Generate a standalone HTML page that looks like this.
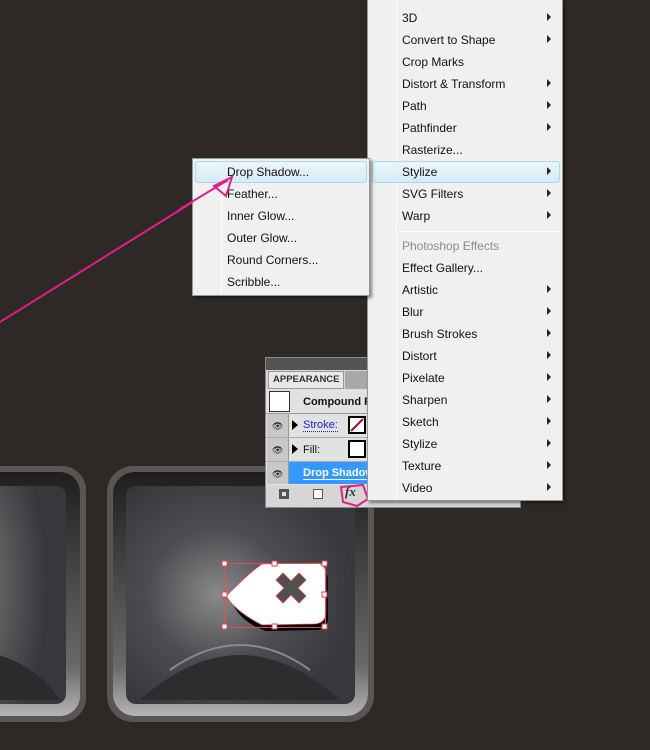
<!DOCTYPE html>
<html><head><meta charset="utf-8"><style>
*{margin:0;padding:0;box-sizing:border-box}
body{width:650px;height:750px;background:#2e2926;position:relative;overflow:hidden;font-family:"Liberation Sans","DejaVu Sans",sans-serif;font-size:12px;color:#111}
.menu{position:absolute;background:#f0f0f0;border:1px solid #979797;box-shadow:2px 2px 3px rgba(0,0,0,.45)}
.it{position:absolute;height:22px;line-height:24px;white-space:nowrap}
.ar{position:absolute;width:0;height:0;border-left:4px solid #222;border-top:4px solid transparent;border-bottom:4px solid transparent}
.hl{position:absolute;height:22px;border:1px solid #a8d8eb;border-radius:3px;background:linear-gradient(#eaf5fa,#d6ebf5)}
.sep{position:absolute;width:1px;background:#e2e2e2;border-right:1px solid #fff}
</style></head><body>

<svg style="position:absolute;left:0;top:0" width="650" height="750">
<defs>
<radialGradient id="g1" cx="0.4" cy="0.5" r="0.6"><stop offset="0" stop-color="#8a8a8c"/><stop offset="0.5" stop-color="#4e4e52"/><stop offset="1" stop-color="#38383c"/></radialGradient>
<radialGradient id="g0" cx="0" cy="0.45" r="0.8"><stop offset="0" stop-color="#7a7a7c"/><stop offset="1" stop-color="#38383c"/></radialGradient>
<linearGradient id="rim" x1="0" y1="0" x2="0" y2="1"><stop offset="0" stop-color="#1f1e1f"/><stop offset="0.8" stop-color="#6a6a6c"/><stop offset="1" stop-color="#b5b5b7"/></linearGradient>
</defs>
<rect x="-40" y="466" width="126" height="256" rx="24" fill="#5a5452"/>
<rect x="-34" y="472" width="114" height="244" rx="20" fill="url(#rim)"/>
<rect x="-30" y="486" width="96" height="218" rx="10" fill="url(#g0)"/>
<path d="M-30 650 Q30 655 60 700 L-30 700Z" fill="#2b2b2e"/>
<rect x="107" y="466" width="267" height="256" rx="26" fill="#5a5452"/>
<rect x="113" y="472" width="255" height="244" rx="22" fill="url(#rim)"/>
<rect x="126" y="486" width="229" height="218" rx="10" fill="url(#g1)"/>
<path d="M140 700 Q240 610 340 700Z" fill="#2d2d30"/>
<path d="M170 670 Q240 620 310 670" stroke="#8a8a8c" stroke-width="2" fill="none"/>
<path d="M230 600 Q255 578 266 567 L318 566 Q326 568 326 578 L326 615 Q326 626 315 627 L264 628 Q240 620 230 600Z" fill="#000" transform="translate(2,3)"/>
<path d="M226 596 Q250 572 262 564 L318 563 Q326 565 326 575 L326 612 Q326 623 315 624 L262 625 Q236 612 226 596Z" fill="#fff" stroke="#e04050" stroke-width="0.8"/>
<path d="M283 573 L291 581 L299 573 L306 580 L298 588 L306 596 L299 603 L291 595 L283 603 L276 596 L284 588 L276 580Z" fill="#505050" stroke="#e04050" stroke-width="0.8"/>
<rect x="224.5" y="563.5" width="101" height="64" fill="none" stroke="#e05050" stroke-width="1"/>
<g fill="#fff" stroke="#e04050" stroke-width="1">
<rect x="222" y="561" width="5" height="5"/><rect x="272" y="561" width="5" height="5"/><rect x="322" y="561" width="5" height="5"/>
<rect x="222" y="592" width="5" height="5"/><rect x="322" y="592" width="5" height="5"/>
<rect x="222" y="624" width="5" height="5"/><rect x="272" y="624" width="5" height="5"/><rect x="322" y="624" width="5" height="5"/>
</g>
<line x1="0" y1="322" x2="228" y2="180" stroke="#e0208a" stroke-width="2"/>
</svg>

<div style="position:absolute;left:265px;top:357px;width:256px;height:151px;background:#d6d6d6;border:1px solid #888"></div>
<div style="position:absolute;left:266px;top:358px;width:254px;height:12px;background:#545454"></div>
<div style="position:absolute;left:268px;top:371px;width:76px;height:18px;background:#e8e8e8;border:1px solid #999;font-size:9.5px;font-weight:bold;color:#333;line-height:16px;padding-left:4px;overflow:hidden;white-space:nowrap">APPEARANCE</div>
<div style="position:absolute;left:345px;top:371px;width:30px;height:18px;background:#a8a8a8"></div>
<div style="position:absolute;left:266px;top:389px;width:254px;height:96px;background:#e2e2e2"></div>
<div style="position:absolute;left:269px;top:391px;width:21px;height:21px;background:#fff;border:1px solid #333"></div>
<div style="position:absolute;left:303px;top:396px;font-size:11px;font-weight:bold">Compound Pa</div>
<div style="position:absolute;left:266px;top:413px;width:254px;height:1px;background:#999"></div>
<div style="position:absolute;left:267px;top:414px;width:21px;height:70px;background:#c8c8c8"></div>
<div style="position:absolute;left:288px;top:414px;width:1px;height:70px;background:#999"></div>
<div style="position:absolute;left:266px;top:437px;width:254px;height:1px;background:#aaa"></div>
<div style="position:absolute;left:266px;top:461px;width:254px;height:1px;background:#aaa"></div>
<div style="position:absolute;left:289px;top:462px;width:231px;height:22px;background:#3399ff"></div>
<div style="position:absolute;left:272px;top:421px;font-size:9px">👁</div>
<div style="position:absolute;left:272px;top:445px;font-size:9px">👁</div>
<div style="position:absolute;left:272px;top:469px;font-size:9px">👁</div>
<div style="position:absolute;left:292px;top:420px;width:0;height:0;border-left:6px solid #000;border-top:5px solid transparent;border-bottom:5px solid transparent"></div>
<div style="position:absolute;left:292px;top:444px;width:0;height:0;border-left:6px solid #000;border-top:5px solid transparent;border-bottom:5px solid transparent"></div>
<div style="position:absolute;left:303px;top:419px;font-size:11px;color:#22c;border-bottom:1px dotted #22c;line-height:12px">Stroke:</div>
<div style="position:absolute;left:303px;top:444px;font-size:11px">Fill:</div>
<div style="position:absolute;left:303px;top:467px;font-size:11px;font-weight:bold;color:#fff;border-bottom:1px solid #fff;line-height:12px">Drop Shadow</div>
<svg style="position:absolute;left:348px;top:416px" width="18" height="18"><rect x="1" y="1" width="16" height="16" fill="#fff" stroke="#000" stroke-width="2"/><line x1="3" y1="15" x2="15" y2="3" stroke="#a01020" stroke-width="2"/></svg>
<div style="position:absolute;left:348px;top:440px;width:18px;height:18px;background:#fff;border:2px solid #000"></div>
<div style="position:absolute;left:279px;top:489px;width:10px;height:10px;background:#555;border:2px solid #555"><div style="width:4px;height:4px;background:#ddd;margin:1px"></div></div>
<div style="position:absolute;left:313px;top:489px;width:10px;height:10px;background:#fff;border:1px solid #555"></div>
<div style="position:absolute;left:345px;top:484px;font-family:'Liberation Serif',serif;font-style:italic;font-weight:bold;font-size:13px;color:#333">fx</div>
<svg style="position:absolute;left:337px;top:482px" width="34" height="28"><path d="M4 5 L26 3 L31 17 L20 24 L6 20Z" fill="none" stroke="#e0208a" stroke-width="2"/></svg>

<div class="menu" style="left:367px;top:-2px;width:196px;height:503px"></div>
<div class="sep" style="left:396px;top:0;height:499px"></div>
<div class="hl" style="left:372px;top:161px;width:188px"></div>
<div style="position:absolute;left:399px;top:231px;width:160px;height:1px;background:#dcdcdc;border-bottom:1px solid #fff"></div>
<div class="it" style="left:402px;top:6px">3D</div>
<div class="it" style="left:402px;top:28px">Convert to Shape</div>
<div class="it" style="left:402px;top:50px">Crop Marks</div>
<div class="it" style="left:402px;top:72px">Distort &amp; Transform</div>
<div class="it" style="left:402px;top:94px">Path</div>
<div class="it" style="left:402px;top:116px">Pathfinder</div>
<div class="it" style="left:402px;top:138px">Rasterize...</div>
<div class="it" style="left:402px;top:160px">Stylize</div>
<div class="it" style="left:402px;top:182px">SVG Filters</div>
<div class="it" style="left:402px;top:204px">Warp</div>
<div class="it" style="left:402px;top:234px;color:#8d8d8d">Photoshop Effects</div>
<div class="it" style="left:402px;top:256px">Effect Gallery...</div>
<div class="it" style="left:402px;top:278px">Artistic</div>
<div class="it" style="left:402px;top:300px">Blur</div>
<div class="it" style="left:402px;top:322px">Brush Strokes</div>
<div class="it" style="left:402px;top:344px">Distort</div>
<div class="it" style="left:402px;top:366px">Pixelate</div>
<div class="it" style="left:402px;top:388px">Sharpen</div>
<div class="it" style="left:402px;top:410px">Sketch</div>
<div class="it" style="left:402px;top:432px">Stylize</div>
<div class="it" style="left:402px;top:454px">Texture</div>
<div class="it" style="left:402px;top:476px">Video</div>
<div class="ar" style="left:547px;top:13px"></div>
<div class="ar" style="left:547px;top:35px"></div>
<div class="ar" style="left:547px;top:79px"></div>
<div class="ar" style="left:547px;top:101px"></div>
<div class="ar" style="left:547px;top:123px"></div>
<div class="ar" style="left:547px;top:167px"></div>
<div class="ar" style="left:547px;top:189px"></div>
<div class="ar" style="left:547px;top:211px"></div>
<div class="ar" style="left:547px;top:285px"></div>
<div class="ar" style="left:547px;top:307px"></div>
<div class="ar" style="left:547px;top:329px"></div>
<div class="ar" style="left:547px;top:351px"></div>
<div class="ar" style="left:547px;top:373px"></div>
<div class="ar" style="left:547px;top:395px"></div>
<div class="ar" style="left:547px;top:417px"></div>
<div class="ar" style="left:547px;top:439px"></div>
<div class="ar" style="left:547px;top:461px"></div>
<div class="ar" style="left:547px;top:483px"></div>

<div class="menu" style="left:192px;top:158px;width:178px;height:138px"></div>
<div class="sep" style="left:221px;top:160px;height:134px"></div>
<div class="hl" style="left:195px;top:161px;width:172px"></div>
<div class="it" style="left:227px;top:160px">Drop Shadow...</div>
<div class="it" style="left:227px;top:182px">Feather...</div>
<div class="it" style="left:227px;top:204px">Inner Glow...</div>
<div class="it" style="left:227px;top:226px">Outer Glow...</div>
<div class="it" style="left:227px;top:248px">Round Corners...</div>
<div class="it" style="left:227px;top:270px">Scribble...</div>
<svg style="position:absolute;left:0;top:0;pointer-events:none" width="650" height="750">
<line x1="180" y1="209" x2="228" y2="180" stroke="#e0208a" stroke-width="2"/>
<path d="M232 177 L214 186 L226 196Z" fill="none" stroke="#e0208a" stroke-width="2"/>
</svg>
</body></html>
